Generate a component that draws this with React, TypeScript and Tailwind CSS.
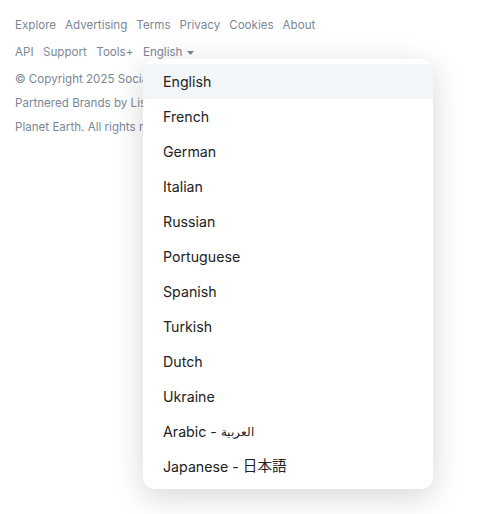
import React from "react";

const links1 = ["Explore", "Advertising", "Terms", "Privacy", "Cookies", "About"];
const langs = [
  "English",
  "French",
  "German",
  "Italian",
  "Russian",
  "Portuguese",
  "Spanish",
  "Turkish",
  "Dutch",
  "Ukraine",
];

export default function App() {
  return (
    <div
      className="relative w-[484px] h-[514px] bg-white overflow-hidden"
      style={{ fontFamily: 'Inter, "Noto Sans", "Noto Sans CJK JP", sans-serif' }}
    >
      <div className="pt-[12px] pl-[15px] text-[11.6px] text-[#7c8796]">
        <div className="flex gap-[9px] leading-[27px]">
          {links1.map((l) => (
            <span key={l}>{l}</span>
          ))}
        </div>
        <div className="flex gap-[9.5px] leading-[27px] items-center">
          <span>API</span>
          <span>Support</span>
          <span>Tools+</span>
          <span className="flex items-center gap-[5px]">
            English
            <svg width="7" height="4" viewBox="0 0 7 4">
              <path d="M0 0 L7 0 L3.5 4 Z" fill="#7c8796" />
            </svg>
          </span>
        </div>
        <div className="mt-[1px] leading-[24px]">© Copyright 2025 Social Media Platform</div>
        <div className="leading-[24px]">Partnered Brands by List of Companies</div>
        <div className="leading-[24px]">Planet Earth. All rights reserved.</div>
      </div>

      <div className="absolute left-[143px] top-[59px] w-[290px] bg-white rounded-[12px] py-[5px] shadow-[0_8px_32px_rgba(0,0,0,0.16)]">
        {langs.map((l, i) => (
          <div
            key={l}
            className={`h-[35px] flex items-center px-5 text-[14.2px] text-[#222222] ${
              i === 0 ? "bg-[#f3f6f9]" : ""
            }`}
          >
            {l}
          </div>
        ))}
        <div className="h-[35px] flex items-center px-5 text-[14.2px] text-[#222222]">
          Arabic -&nbsp;<span className="text-[12px]">العربية</span>
        </div>
        <div className="h-[35px] flex items-center px-5 text-[14.2px] text-[#222222]">
          Japanese - <span className="ml-[4px] text-[14.6px]">日本語</span>
        </div>
      </div>
    </div>
  );
}
